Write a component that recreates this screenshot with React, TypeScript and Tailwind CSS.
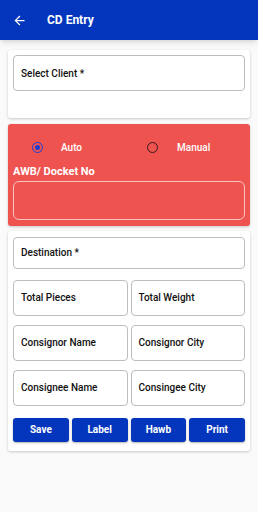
import React from 'react'
import { MdArrowBack } from 'react-icons/md'

const ROWS = [
  ['Total Pieces', 'Total Weight'],
  ['Consignor Name', 'Consignor City'],
  ['Consignee Name', 'Consingee City'],
]

const BUTTONS = ['Save', 'Label', 'Hawb', 'Print']

function Field({ label, className = '' }: { label: string; className?: string }) {
  return (
    <div
      className={`flex items-center rounded-[4px] border border-[#bdbdbd] bg-white px-[7px] text-[10px] font-medium text-[#111] ${className}`}
    >
      {label}
    </div>
  )
}

function Radio({ checked }: { checked?: boolean }) {
  return checked ? (
    <span className="flex h-[11px] w-[11px] items-center justify-center rounded-full border-[1.5px] border-[#1a3fd0]">
      <span className="h-[5px] w-[5px] rounded-full bg-[#1a3fd0]" />
    </span>
  ) : (
    <span className="h-[11px] w-[11px] rounded-full border-[1.5px] border-[#3a1a1a]" />
  )
}

export default function App() {
  return (
    <div className="min-h-[512px] bg-[#fafafa] font-['Roboto',sans-serif]">
      <header className="flex h-[40px] items-center bg-[#0336bd] pl-[12px] text-white shadow-md">
        <MdArrowBack size={15} />
        <h1 className="ml-[20px] text-[12px] font-bold">CD Entry</h1>
      </header>

      <div className="px-[8px] pt-[10px]">
        <div className="rounded-[3px] bg-white p-[5px] pb-[27px] shadow-[0_1px_3px_rgba(0,0,0,0.2)]">
          <Field label="Select Client *" className="h-[36px]" />
        </div>

        <div className="mt-[6px] rounded-[3px] bg-[#ef5350] px-[5px] pb-[6px] pt-[16px] text-white shadow-[0_1px_3px_rgba(0,0,0,0.2)]">
          <div className="flex items-center text-[10px] font-medium">
            <div className="ml-[19px] flex w-[115px] items-center">
              <Radio checked />
              <span className="ml-[18px]">Auto</span>
            </div>
            <div className="flex items-center">
              <Radio />
              <span className="ml-[19px]">Manual</span>
            </div>
          </div>
          <p className="mt-[9px] text-[11px] font-bold">AWB/ Docket No</p>
          <div className="h-[39px] rounded-[6px] border border-[#f5c4c3]" />
        </div>

        <div className="mt-[5px] rounded-[3px] bg-white px-[5px] pb-[9px] pt-[6px] shadow-[0_1px_3px_rgba(0,0,0,0.2)]">
          <Field label="Destination *" className="h-[32px]" />
          {ROWS.map((row, i) => (
            <div
              key={row[0]}
              className={`grid grid-cols-2 gap-[3px] ${i === 0 ? 'mt-[11px]' : 'mt-[9px]'}`}
            >
              {row.map((label) => (
                <Field key={label} label={label} className="h-[36px]" />
              ))}
            </div>
          ))}
          <div className="mt-[12px] grid grid-cols-4 gap-[3px]">
            {BUTTONS.map((b) => (
              <button
                key={b}
                className="h-[24px] rounded-[3px] bg-[#0336bd] text-[10px] font-bold text-white shadow-[0_1px_2px_rgba(0,0,0,0.3)]"
              >
                {b}
              </button>
            ))}
          </div>
        </div>
      </div>
    </div>
  )
}
